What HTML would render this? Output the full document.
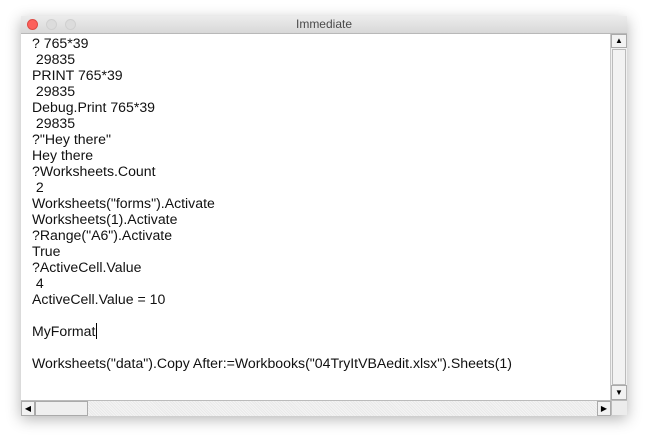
<!DOCTYPE html>
<html><head><style>
body{margin:0;width:647px;height:440px;background:#fff;position:relative;overflow:hidden;font-family:"Liberation Sans",sans-serif}
.win{position:absolute;left:21px;top:16px;width:606px;height:399px;box-shadow:0 4px 14px rgba(0,0,0,.3);background:#fff}
.title{position:absolute;left:0;top:0;width:606px;height:17px;background:linear-gradient(#ececec,#d8d8d8);border-bottom:1px solid #b8b8b8;font-size:12px;color:#4a4a4a;text-align:center;line-height:17px}
.dot{position:absolute;top:3px;width:11px;height:11px;border-radius:50%;background:#dcdcdc;border:1px solid #d0d0d0;box-sizing:border-box}
.txt{position:absolute;left:11px;top:19px;font-size:14.1px;line-height:16px;color:#111;white-space:pre}
.vs{position:absolute;left:589px;top:18px;width:16px;height:366px;background:#f0f0f0;border-left:1px solid #c8c8c8}
.btn{position:absolute;background:#f2f2f2;border:1px solid #aaa;box-sizing:border-box}
.hs{position:absolute;left:0;top:384px;width:590px;height:15px;background:repeating-linear-gradient(45deg,#f4f4f4 0 1px,#e9e9e9 1px 2px);border-top:1px solid #bbb}
</style></head><body>
<div class="win">
<div class="title">Immediate
<div class="dot" style="left:6px;background:#fc605b;border-color:#de4a44"></div>
<div class="dot" style="left:25px"></div>
<div class="dot" style="left:44px"></div>
</div>
<div class="txt">? 765*39
 29835
PRINT 765*39
 29835
Debug.Print 765*39
 29835
?"Hey there"
Hey there
?Worksheets.Count
 2
Worksheets("forms").Activate
Worksheets(1).Activate
?Range("A6").Activate
True
?ActiveCell.Value
 4
ActiveCell.Value = 10

MyFormat<span style="border-left:1px solid #000;margin-left:1px"></span>

Worksheets("data").Copy After:=Workbooks("04TryItVBAedit.xlsx").Sheets(1)</div>
<div class="vs">
<div class="btn" style="left:0;top:0;width:16px;height:14px;font-size:8px;text-align:center;line-height:12px">▲</div>
<div class="btn" style="left:1px;top:15px;width:14px;height:336px;border-color:#bbb"></div>
<div class="btn" style="left:0;top:351px;width:16px;height:15px;font-size:8px;text-align:center;line-height:13px">▼</div>
</div>
<div class="hs">
<div class="btn" style="left:0;top:0;width:14px;height:15px;font-size:8px;text-align:center;line-height:13px">◀</div>
<div class="btn" style="left:14px;top:0;width:53px;height:15px;background:#efefef"></div>
<div class="btn" style="left:576px;top:0;width:14px;height:15px;font-size:8px;text-align:center;line-height:13px">▶</div>
</div>
<div style="position:absolute;left:590px;top:384px;width:16px;height:15px;background:#ececec;border-top:1px solid #bbb;border-left:1px solid #bbb;box-sizing:border-box"></div>
</div>
</body></html>
